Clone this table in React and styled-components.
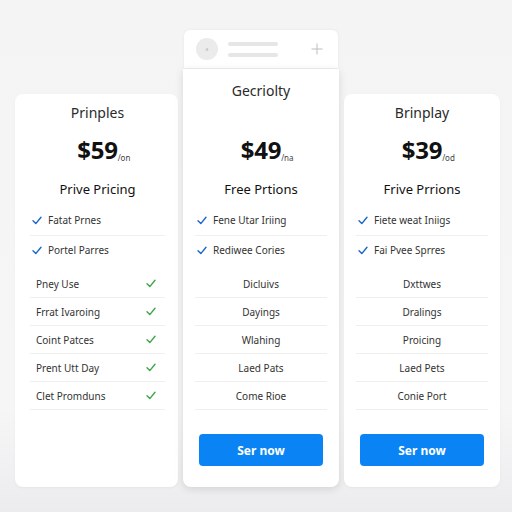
import React from 'react'
import styled, { createGlobalStyle } from 'styled-components'

const GlobalStyle = createGlobalStyle`
  html, body {
    margin: 0;
    padding: 0;
    background: #f3f3f4;
    font-family: "Noto Sans", "Open Sans", Arial, sans-serif;
    color: #222;
  }
`

const plans = [
  {
    title: 'Prinples',
    price: '$59',
    per: '/on',
    subtitle: 'Prive Pricing',
    features: ['Fatat Prnes', 'Portel Parres'],
    list: ['Pney Use', 'Frrat Ivaroing', 'Coint Patces', 'Prent Utt Day', 'Clet Promduns'],
    align: 'left',
  },
  {
    title: 'Gecriolty',
    price: '$49',
    per: '/na',
    subtitle: 'Free Prtions',
    features: ['Fene Utar Iriing', 'Rediwee Cories'],
    list: ['Dicluivs', 'Dayings', 'Wlahing', 'Laed Pats', 'Come Rioe'],
    align: 'center',
    button: 'Ser now',
    featured: true,
  },
  {
    title: 'Brinplay',
    price: '$39',
    per: '/od',
    subtitle: 'Frive Prrions',
    features: ['Fiete weat Iniigs', 'Fai Pvee Sprres'],
    list: ['Dxttwes', 'Dralings', 'Proicing', 'Laed Pets', 'Conie Port'],
    align: 'center',
    button: 'Ser now',
  },
]

function Check({ color }) {
  return (
    <svg width="10" height="9" viewBox="0 0 10 9">
      <path d="M1 4.8 L3.8 7.6 L9 1.2" fill="none" stroke={color} strokeWidth="1.4" strokeLinecap="round" strokeLinejoin="round" />
    </svg>
  )
}

function PlanCard({ plan }) {
  return (
    <Card featured={plan.featured}>
      <Title>{plan.title}</Title>
      <Price featured={plan.featured}>
        <Amount>
          {plan.price}
          <Per>{plan.per}</Per>
        </Amount>
      </Price>
      <Subtitle>{plan.subtitle}</Subtitle>
      <Features>
        {plan.features.map((f) => (
          <FeatureRow key={f}>
            <Check color="#1d67c4" />
            <span>{f}</span>
          </FeatureRow>
        ))}
      </Features>
      <List>
        {plan.list.map((item) => (
          <ListRow key={item} align={plan.align}>
            <span>{item}</span>
            {plan.align === 'left' && <Check color="#3fa64a" />}
          </ListRow>
        ))}
      </List>
      {plan.button && <Button>{plan.button}</Button>}
    </Card>
  )
}

export default function App() {
  return (
    <>
      <GlobalStyle />
      <Page>
        <PlanCard plan={plans[0]} />
        <MiddleColumn>
          <TopBar>
            <Avatar>a</Avatar>
            <Lines>
              <Line />
              <Line />
            </Lines>
            <svg width="12" height="12" viewBox="0 0 12 12">
              <path d="M6 0.5 V11.5 M0.5 6 H11.5" stroke="#bdbdbd" strokeWidth="1" />
            </svg>
          </TopBar>
          <PlanCard plan={plans[1]} />
        </MiddleColumn>
        <PlanCard plan={plans[2]} />
      </Page>
    </>
  )
}

const Page = styled.div`
  width: 512px;
  height: 512px;
  box-sizing: border-box;
  padding: 0 12px 25px 15px;
  display: flex;
  align-items: flex-end;
  gap: 5px;
  background: linear-gradient(#f4f4f5, #f6f6f7 80%, #ececee);
`

const MiddleColumn = styled.div`
  display: flex;
  flex-direction: column;
  gap: 1px;
`

const TopBar = styled.div`
  width: 154px;
  height: 38px;
  margin-left: 1px;
  box-sizing: border-box;
  padding: 0 15px 0 12px;
  background: #fff;
  border-radius: 6px 6px 0 0;
  box-shadow: 0 0 3px rgba(0, 0, 0, 0.06);
  display: flex;
  align-items: center;
`

const Avatar = styled.div`
  width: 22px;
  height: 22px;
  border-radius: 50%;
  background: #ebebeb;
  color: #b5b5b5;
  font-size: 5px;
  display: flex;
  align-items: center;
  justify-content: center;
`

const Lines = styled.div`
  display: flex;
  flex-direction: column;
  gap: 7px;
  margin-left: 10px;
  flex: 1;
`

const Line = styled.div`
  width: 50px;
  height: 4px;
  border-radius: 2px;
  background: #e6e6e6;
`

const Card = styled.div`
  width: 156px;
  height: ${(p) => (p.featured ? '418px' : '393px')};
  box-sizing: border-box;
  padding: ${(p) => (p.featured ? '13px 12px 0' : '10px 12px 0')};
  background: #fff;
  border-radius: ${(p) => (p.featured ? '0 0 8px 8px' : '8px')};
  box-shadow: ${(p) =>
    p.featured ? '0 2px 8px rgba(0, 0, 0, 0.12)' : '0 1px 3px rgba(0, 0, 0, 0.04)'};
  display: flex;
  flex-direction: column;
  &:first-child {
    width: 163px;
    padding: 10px 13px 0 15px;
  }
`

const Title = styled.div`
  font-size: 14px;
  line-height: 18px;
  text-align: center;
  color: #2a2a2a;
`

const Price = styled.div`
  margin-top: ${(p) => (p.featured ? '35px' : '13px')};
  height: 30px;
  font-size: 24px;
  font-weight: 700;
  line-height: 30px;
  text-align: center;
  color: #111;
  letter-spacing: -0.3px;
`

const Amount = styled.span`
  position: relative;
`

const Per = styled.span`
  position: absolute;
  left: 100%;
  bottom: 4px;
  font-size: 8px;
  line-height: 1;
  font-weight: 400;
  letter-spacing: 0;
  color: #444;
`

const Subtitle = styled.div`
  margin-top: 15px;
  font-size: 13px;
  font-weight: 400;
  line-height: 18px;
  text-align: center;
  color: #111;
`

const Features = styled.div`
  margin-top: 7px;
`

const FeatureRow = styled.div`
  height: 30px;
  box-sizing: border-box;
  display: flex;
  align-items: center;
  gap: 6px;
  padding-left: 2px;
  font-size: 10px;
  color: #333;
  & + & {
    height: 29px;
    border-top: 1px solid #efefef;
  }
`

const List = styled.div`
  margin-top: 6px;
`

const ListRow = styled.div`
  height: 28px;
  box-sizing: border-box;
  border-bottom: 1px solid #efefef;
  display: flex;
  align-items: center;
  justify-content: ${(p) => (p.align === 'left' ? 'space-between' : 'center')};
  padding: ${(p) => (p.align === 'left' ? '0 9px 0 6px' : '0')};
  font-size: 10px;
  color: #333;
`

const Button = styled.button`
  margin: 24px 4px 0;
  height: 32px;
  border: none;
  border-radius: 4px;
  background: #0a84f5;
  color: #fff;
  font-family: inherit;
  font-size: 12px;
  font-weight: 700;
`
